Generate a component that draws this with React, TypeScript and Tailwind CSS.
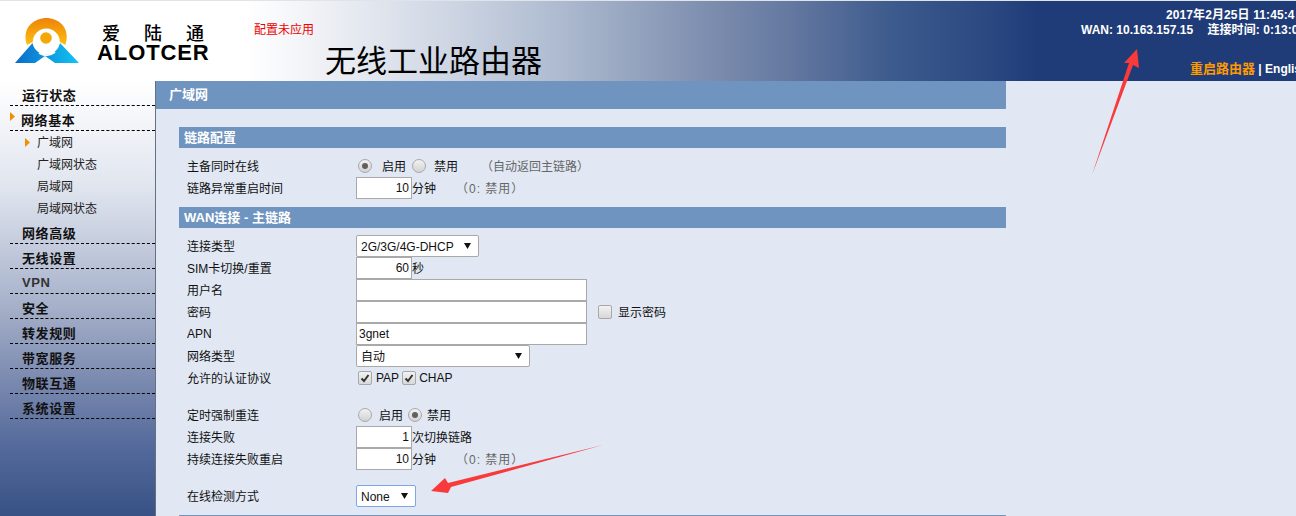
import React from "react";

const sideItems = ["网络高级", "无线设置", "VPN", "安全", "转发规则", "带宽服务", "物联互通", "系统设置"];
const subItems = ["广域网状态", "局域网", "局域网状态"];

function Orange({ className }: { className: string }) {
  return (
    <svg viewBox="0 0 5 9" className={className}>
      <polygon points="0,0 5,4.5 0,9" fill="#f09000" />
    </svg>
  );
}

function Logo() {
  return (
    <svg viewBox="0 0 64 46" className="w-[64px] h-[46px] shrink-0">
      <defs>
        <linearGradient id="arc" x1="0" y1="0" x2="0" y2="1">
          <stop offset="0" stopColor="#ee8208" />
          <stop offset="1" stopColor="#fcc010" />
        </linearGradient>
        <linearGradient id="hill" x1="0" y1="0" x2="1" y2="0">
          <stop offset="0" stopColor="#0a6cc8" />
          <stop offset="1" stopColor="#12c4f4" />
        </linearGradient>
      </defs>
      <path d="M12 28C6 10 20 1 31.3 1C43 1 56 10 50.5 28L44.8 25A13.5 13.5 0 1 0 17.8 25Z" fill="url(#arc)" />
      <circle cx="31" cy="21" r="5.8" fill="#f4a808" />
      <path d="M0 46L17.5 26A14 14 0 0 0 45 26L64 46H40L30 39L20 46Z" fill="url(#hill)" />
      <path d="M24 36Q32 41 40 35" fill="none" stroke="#ffffff" strokeWidth="2" />
    </svg>
  );
}

function Header() {
  return (
    <div className="flex h-[81px] shrink-0 border-t border-[#dfe3ea] bg-[linear-gradient(90deg,#ffffff_19%,#eef0f5_25%,#cdd5e3_35%,#aebbd0_43%,#8090b0_54%,#6478a0_61%,#3c5a8c_69%,#2a4680_77%,#203c78_80%)]">
      <div className="w-[254px] shrink-0 flex pl-[15px] pt-[16px]">
        <Logo />
        <div className="ml-[18px] text-black">
          <div className="w-[108px] flex justify-between pl-[5px] pr-[1px] text-[18px] leading-[20px] mt-[5px] font-medium font-['Noto_Sans_CJK_SC',sans-serif]">
            <span>爱</span>
            <span>陆</span>
            <span>通</span>
          </div>
          <div className="text-[22px] leading-[20px] tracking-[0.9px] font-bold whitespace-nowrap mt-[1px] font-['Liberation_Sans',sans-serif]">
            ALOTCER
          </div>
        </div>
      </div>
      <div className="w-[827px] shrink-0 pt-[20px]">
        <div className="text-[12px] leading-[16px] pt-[1px] text-[#ee0000]">配置未应用</div>
        <div className="pl-[71px] mt-[2px] text-[31px] leading-[44px] text-black whitespace-nowrap">无线工业路由器</div>
      </div>
      <div className="w-[215px] shrink-0 pt-[7px] text-white text-[12px] font-bold leading-[15px] whitespace-nowrap">
        <div className="pl-[85px] tracking-[0.1px]">2017年2月25日 11:45:4</div>
        <div>
          WAN: 10.163.157.15 <span className="ml-[11px] tracking-[0.1px]">连接时间: 0:13:0</span>
        </div>
        <div className="pl-[109px] mt-[22px] leading-[18px]">
          <span className="text-[#ff9900] text-[13px]">重启路由器</span> | English
        </div>
      </div>
    </div>
  );
}

function Sidebar() {
  const head = "h-[25px] ml-[10px] flex items-center border-b border-dashed border-black text-[13px] tracking-[0.6px] font-bold text-[#111111]";
  return (
    <div className="w-[156px] shrink-0 border-r border-[#687080] bg-[linear-gradient(180deg,#ffffff_0%,#dfe4ee_25%,#a5b0c9_52%,#7c8bb0_68%,#52689a_85%,#385285_100%)]">
      <div className={head + " pt-[5px] pl-[12px]"}>运行状态</div>
      <div className={head + " pt-[5px]"}>
        <Orange className="w-[5px] h-[9px] mr-[6px] mb-[8px]" />
        网络基本
      </div>
      <div className="h-[22px] flex items-center pt-[2px] pl-[25px] text-[12px] text-[#222222]">
        <Orange className="w-[5px] h-[9px] mr-[7px] mb-[2px]" />
        广域网
      </div>
      {subItems.map((s) => (
        <div key={s} className="h-[22px] flex items-center pt-[2px] pl-[37px] text-[12px] text-[#222222]">
          {s}
        </div>
      ))}
      {sideItems.map((s) => (
        <div key={s} className={head + " pl-[12px] " + (s === "VPN" ? "pt-[3px] text-[#333333]" : "pt-[5px]")}>
          {s}
        </div>
      ))}
    </div>
  );
}

function SectionBar({ title }: { title: string }) {
  return (
    <div className="h-[21px] ml-[23px] pl-[5px] flex items-center bg-[#6f94c0] text-white text-[13px] font-bold">
      {title}
    </div>
  );
}

function Row({ label, children }: { label: string; children?: React.ReactNode }) {
  return (
    <div className="h-[22px] flex items-center text-[12px] text-[#111111]">
      <div className={`w-[200px] pl-[31px] shrink-0 ${label === "APN" ? "" : "pt-[2px]"}`}>{label}</div>
      {children}
    </div>
  );
}

// labels sit 1px lower than the controls next to them
function Txt({ text, className = "" }: { text: string; className?: string }) {
  return <span className={`pt-[2px] whitespace-nowrap ${className}`}>{text}</span>;
}

function TextBox({ width, value = "", right = false }: { width: string; value?: string; right?: boolean }) {
  return (
    <input
      readOnly
      value={value}
      className={`${width} h-[22px] bg-white border border-[#a9a9a9] px-[2px] text-[12px] text-[#111111] outline-none ${right ? "text-right" : "text-left"}`}
    />
  );
}

function Picker({ width, value, focus = false }: { width: string; value: string; focus?: boolean }) {
  return (
    <div
      className={`${width} h-[22px] flex items-center justify-between pl-[4px] pr-[7px] bg-white border rounded-[2px] text-[12px] text-[#111111] ${
        focus ? "border-[#7aa7e8]" : "border-[#a9a9a9]"
      }`}
    >
      <span className="pt-[1px]">{value}</span>
      <svg viewBox="0 0 7 6" className="w-[7px] h-[6px]">
        <polygon points="0,0 7,0 3.5,6" fill="#111111" />
      </svg>
    </div>
  );
}

function Radio({ on = false, className }: { on?: boolean; className: string }) {
  return (
    <span className={`w-[14px] h-[14px] shrink-0 rounded-full border border-[#a8a8a8] bg-[linear-gradient(180deg,#f2f2f2,#d2d2d2)] flex items-center justify-center ${className}`}>
      {on && <span className="w-[6px] h-[6px] rounded-full bg-[#606060]" />}
    </span>
  );
}

function Check({ on = false, className }: { on?: boolean; className: string }) {
  return (
    <span className={`w-[14px] h-[14px] shrink-0 rounded-[2px] border border-[#a8a8a8] bg-[linear-gradient(180deg,#f2f2f2,#d8d8d8)] flex items-center justify-center ${className}`}>
      {on && (
        <svg viewBox="0 0 10 10" className="w-[10px] h-[10px]">
          <path d="M1.5 5.5L4 8L8.5 2" fill="none" stroke="#333333" strokeWidth="2" />
        </svg>
      )}
    </span>
  );
}

function Form() {
  return (
    <div className="w-[850px] shrink-0">
      <div className="h-[28px] pl-[13px] flex items-center bg-[#6f94c0] text-white text-[13px] font-bold">广域网</div>
      <div className="mt-[18px]">
        <SectionBar title="链路配置" />
      </div>
      <div className="mt-[7px]">
        <Row label="主备同时在线">
          <Radio on className="ml-[2px]" />
          <Txt text="启用" className="ml-[10px]" />
          <Radio className="ml-[6px]" />
          <Txt text="禁用" className="ml-[8px]" />
          <Txt text="（自动返回主链路）" className="ml-[23px] text-[#666666]" />
        </Row>
        <Row label="链路异常重启时间">
          <TextBox width="w-[56px]" value="10" right />
          <Txt text="分钟" />
          <Txt text="（0: 禁用）" className="ml-[20px] tracking-[1px] text-[#666666]" />
        </Row>
      </div>
      <div className="mt-[8px]">
        <SectionBar title="WAN连接 - 主链路" />
      </div>
      <div className="mt-[7px]">
        <Row label="连接类型"><Picker width="w-[123px]" value="2G/3G/4G-DHCP" /></Row>
        <Row label="SIM卡切换/重置">
          <TextBox width="w-[56px]" value="60" right />
          <Txt text="秒" />
        </Row>
        <Row label="用户名"><TextBox width="w-[231px]" /></Row>
        <Row label="密码">
          <TextBox width="w-[231px]" />
          <Check className="ml-[11px]" />
          <Txt text="显示密码" className="ml-[6px]" />
        </Row>
        <Row label="APN"><TextBox width="w-[231px]" value="3gnet" /></Row>
        <Row label="网络类型"><Picker width="w-[174px]" value="自动" /></Row>
        <Row label="允许的认证协议">
          <Check on className="ml-[2px]" />
          <span className="ml-[4px]">PAP</span>
          <Check on className="ml-[3px]" />
          <span className="ml-[3px]">CHAP</span>
        </Row>
      </div>
      <div className="mt-[15px]">
        <Row label="定时强制重连">
          <Radio className="ml-[2px]" />
          <Txt text="启用" className="ml-[7px]" />
          <Radio on className="ml-[5px]" />
          <Txt text="禁用" className="ml-[5px]" />
        </Row>
        <Row label="连接失败">
          <TextBox width="w-[56px]" value="1" right />
          <Txt text="次切换链路" />
        </Row>
        <Row label="持续连接失败重启">
          <TextBox width="w-[56px]" value="10" right />
          <Txt text="分钟" />
          <Txt text="（0: 禁用）" className="ml-[20px] tracking-[1px] text-[#666666]" />
        </Row>
      </div>
      <div className="mt-[15px]">
        <Row label="在线检测方式"><Picker width="w-[60px]" value="None" focus /></Row>
      </div>
      <div className="h-[1px] mt-[8px] ml-[23px] bg-[#6f94c0]" />
    </div>
  );
}

export default function App() {
  return (
    <div className="relative w-[1296px] h-[516px] overflow-hidden flex flex-col bg-[#e1e8f4] font-['Liberation_Sans','Noto_Sans_CJK_SC',sans-serif]">
      <Header />
      <div className="flex flex-1">
        <Sidebar />
        <Form />
      </div>
      <svg viewBox="0 0 1296 516" className="absolute inset-0 w-[1296px] h-[516px] pointer-events-none">
        <polygon points="1137,49 1139,68 1133,65 1092,175 1129,63 1124,63" fill="#f93a3a" />
        <polygon points="431,491 445,478 448,483 603,445 451,487 448,493" fill="#f93a3a" />
      </svg>
    </div>
  );
}
